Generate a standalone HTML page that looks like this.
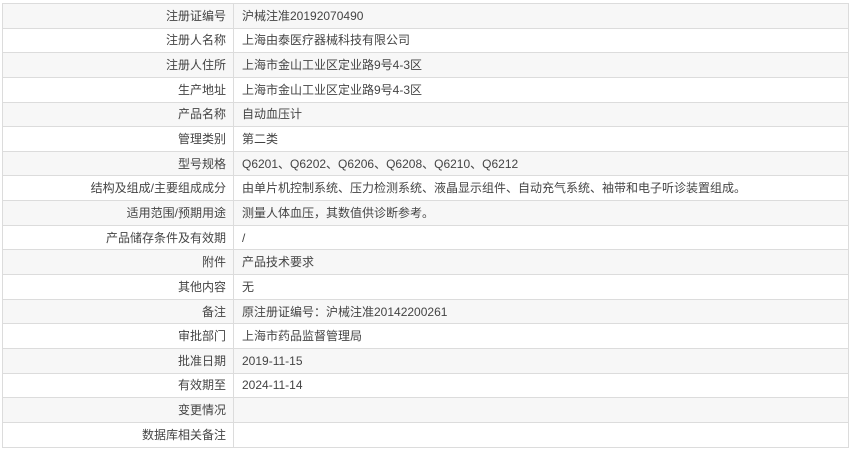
<!DOCTYPE html>
<html><head><meta charset="utf-8"><style>
html,body{margin:0;padding:0;background:#fff;width:850px;height:451px;overflow:hidden}
table{position:absolute;left:2px;top:3px;width:847px;border-collapse:collapse;font-family:"Liberation Sans","Noto Sans CJK SC",sans-serif;font-size:12px;color:#444}
td{border:1px solid #dcdcdc;height:23.65px;padding:0 8px;line-height:14px}
td.l{width:215px;text-align:right;padding-right:7px}
tr:nth-child(odd) td{background:#f7f7f7}
tr:nth-child(even) td{background:#fff}
</style></head><body>
<table>
<tr><td class="l">注册证编号</td><td>沪械注准20192070490</td></tr>
<tr><td class="l">注册人名称</td><td>上海由泰医疗器械科技有限公司</td></tr>
<tr><td class="l">注册人住所</td><td>上海市金山工业区定业路9号4-3区</td></tr>
<tr><td class="l">生产地址</td><td>上海市金山工业区定业路9号4-3区</td></tr>
<tr><td class="l">产品名称</td><td>自动血压计</td></tr>
<tr><td class="l">管理类别</td><td>第二类</td></tr>
<tr><td class="l">型号规格</td><td>Q6201、Q6202、Q6206、Q6208、Q6210、Q6212</td></tr>
<tr><td class="l">结构及组成/主要组成成分</td><td>由单片机控制系统、压力检测系统、液晶显示组件、自动充气系统、袖带和电子听诊装置组成。</td></tr>
<tr><td class="l">适用范围/预期用途</td><td>测量人体血压，其数值供诊断参考。</td></tr>
<tr><td class="l">产品储存条件及有效期</td><td>/</td></tr>
<tr><td class="l">附件</td><td>产品技术要求</td></tr>
<tr><td class="l">其他内容</td><td>无</td></tr>
<tr><td class="l">备注</td><td>原注册证编号：沪械注准20142200261</td></tr>
<tr><td class="l">审批部门</td><td>上海市药品监督管理局</td></tr>
<tr><td class="l">批准日期</td><td>2019-11-15</td></tr>
<tr><td class="l">有效期至</td><td>2024-11-14</td></tr>
<tr><td class="l">变更情况</td><td></td></tr>
<tr><td class="l">数据库相关备注</td><td></td></tr>
</table>
</body></html>
